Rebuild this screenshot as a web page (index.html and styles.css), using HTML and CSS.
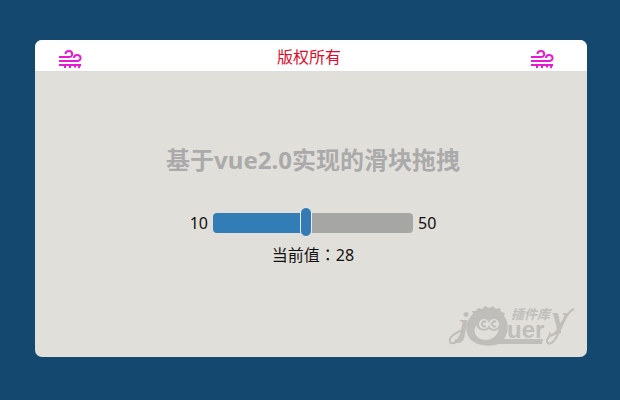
FILE: index.html
```html
<!DOCTYPE html>
<html lang="zh-CN">
<head>
<meta charset="utf-8">
<meta name="viewport" content="width=device-width, initial-scale=1">
<title>基于vue2.0实现的滑块拖拽</title>
<link rel="stylesheet" href="styles.css">
</head>
<body>
<main class="card">
  <header class="bar">
    <svg class="wind" viewBox="0 0 24 20" aria-hidden="true">
      <path d="M1 8H11C15.500 8 15 2 11 2C8.500 2 7.500 3.500 7.500 5M1 12H19C24 12 23.500 6 19 6C17 6 16 7.500 16 9M1 16H23M7 16V19M12 16V19M17 16V18.500M22 16L20.500 19"/>
    </svg>
    <span>版权所有</span>
    <svg class="wind" viewBox="0 0 24 20" aria-hidden="true">
      <path d="M1 8H11C15.500 8 15 2 11 2C8.500 2 7.500 3.500 7.500 5M1 12H19C24 12 23.500 6 19 6C17 6 16 7.500 16 9M1 16H23M7 16V19M12 16V19M17 16V18.500M22 16L20.500 19"/>
    </svg>
  </header>
  <section class="content">
    <h1 class="title">基于vue2.0实现的滑块拖拽</h1>
    <div class="slider">
      <span>10</span>
      <div class="track"><input class="range" type="range" min="10" max="50" value="28" aria-label="当前值"></div>
      <span>50</span>
    </div>
    <output class="current">当前值<span class="colon" lang="zh-TW">：</span>28</output>
  </section>
  <svg class="logo" viewBox="0 0 132 48" role="img" aria-label="jQuery插件库">
    <text class="script" x="13" y="34">j</text>
    <path class="stroke" d="M17 28C14 36 9 43 5 41C1 38 6 32 17 28"/>
    <path class="shape" fill-rule="evenodd" d="M27 12L26 9L30 9L32 6L36 7L39 4L43 6L47 4L50 7L54 6L55 10L59 11L58 14C63 20 63 30 58 37H97L96 42H53C44 45 32 44 25 38C18 31 19 19 27 12ZM30 23C27 29 29 35 35 37C42 40 51 36 53 27C51 29 47 30 43 27C39 30 32 29 30 23Z"/>
    <circle class="eye" cx="38" cy="22" r="5"/>
    <circle class="eye" cx="48" cy="22" r="5"/>
    <path class="pupil" d="M40 20A2.500 2.500 0 1 0 40 24M50 20A2.500 2.500 0 1 0 50 24"/>
    <text class="word" x="61" y="36">uer</text>
    <text class="script" x="106" y="27">y</text>
    <path class="stroke" d="M128 7C121 9 116 24 111 34C107 42 101 44 101 39C101 35 106 32 115 30"/>
    <text class="label" x="65" y="17">插件库</text>
  </svg>
</main>
</body>
</html>
```

FILE: styles.css
```css
* {
  box-sizing: border-box;
}

body {
  margin: 0;
  padding: 40px 33px 43px 35px;
  min-height: 100vh;
  display: flex;
  background: #15486f;
  color: #111;
  font: 16px/24px "Noto Sans", "Noto Sans CJK SC", sans-serif;
}

.card {
  flex: 1;
  display: flex;
  flex-direction: column;
  overflow: hidden;
  border-radius: 7px;
  background: #e1dfda;
}

.bar {
  display: grid;
  grid-template-columns: 24px 1fr 24px;
  align-items: center;
  height: 32px;
  padding: 2px 33px 0 23px;
  border-bottom: 1px solid #dcdedb;
  background: #fff;
  color: #dc0c2c;
}

.bar span {
  padding-left: 6px;
  text-align: center;
}

.wind {
  width: 24px;
  height: 20px;
  margin-top: 4px;
}

.wind path {
  fill: none;
  stroke: #e619d5;
  stroke-width: 2;
}

.content {
  display: flex;
  flex-direction: column;
  align-items: center;
  padding: 72px 0 0 4px;
}

.title {
  margin: 0;
  color: #aaa;
  font-size: 24px;
  line-height: 32px;
}

.slider {
  display: flex;
  align-items: center;
  gap: 5px;
  margin-top: 32px;
  height: 30px;
}

.track {
  width: 200px;
  height: 20px;
  border-radius: 4px;
  background: linear-gradient(to right, #337db7 45%, #a6a6a5 45%);
}

/* Slightly wider than the track so the thumb can overhang its end. */
.range {
  display: block;
  appearance: none;
  width: 206px;
  height: 30px;
  margin: -6px 0 0;
  background: transparent;
  cursor: pointer;
}

.range::-webkit-slider-thumb {
  appearance: none;
  width: 12px;
  height: 30px;
  border: 1px solid #e5eef3;
  border-radius: 6px;
  background: #347bb3;
}

.current {
  margin-top: 4px;
}

.colon {
  font-family: "Noto Sans CJK TC", sans-serif;
}

.logo {
  width: 132px;
  height: 48px;
  margin: auto 9px 7px auto;
  overflow: visible;
  fill: #bfbebb;
}

.script {
  font: italic bold 34px "Liberation Serif", serif;
}

.stroke {
  fill: none;
  stroke: #bfbebb;
  stroke-width: 2;
}

.eye {
  fill: #e1dfda;
}

.pupil {
  fill: none;
  stroke: #bfbebb;
  stroke-width: 2;
}

.word {
  font: bold 24px "Liberation Sans", sans-serif;
}

.label {
  font: italic bold 13px "Noto Sans CJK SC", sans-serif;
}
```
